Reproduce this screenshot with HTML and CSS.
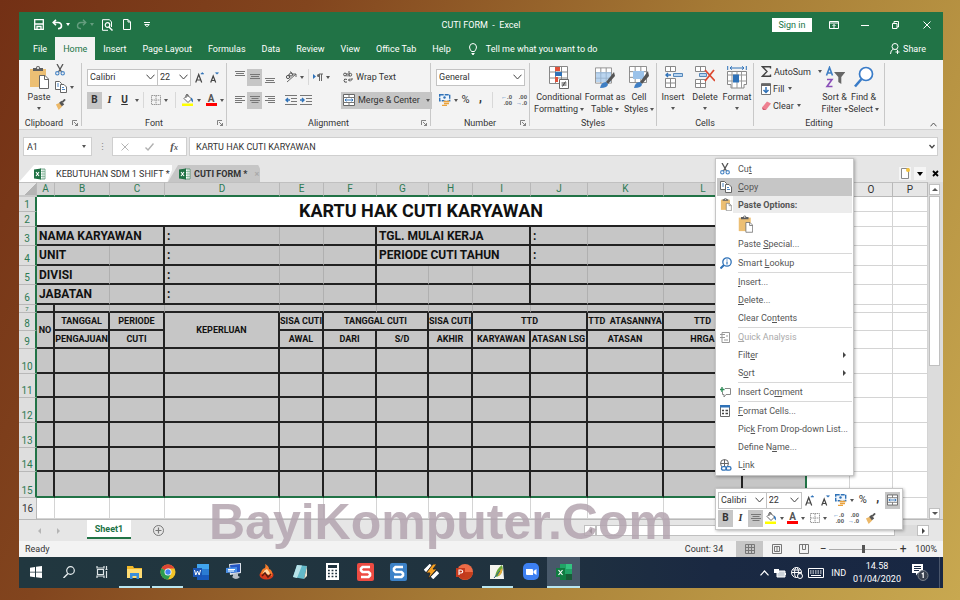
FILE: index.html
```html
<!DOCTYPE html>
<html lang="en">
<head>
<meta charset="utf-8">
<title>CUTI FORM - Excel</title>
<link rel="stylesheet" href="styles.css">
</head>
<body>
<svg class="defs" aria-hidden="true">
  <symbol id="clip" viewBox="0 0 20 23"><path d="M1 3h16v18H1z" fill="#ecbf74"/><path d="M4 5V2h3q0-2 2-2t2 2h3v3z" fill="#5d5d5d"/><circle cx="9" cy="2" r="1" fill="#fff"/><path d="M10.500 9.500h5.500l3.500 3.500v9.500h-9z" fill="#fff" stroke="#666"/><path d="M15.500 9.500v4h4" fill="none" stroke="#666"/></symbol>
  <symbol id="cut" viewBox="0 0 10 12"><path d="M2 0l4.500 8M8 0L3.500 8" stroke="#555" stroke-width="1.300" fill="none"/><circle cx="2.300" cy="9.300" r="1.700" fill="none" stroke="#4a86c5" stroke-width="1.100"/><circle cx="7.700" cy="9.300" r="1.700" fill="none" stroke="#4a86c5" stroke-width="1.100"/></symbol>
  <symbol id="copy" viewBox="0 0 12 12"><path d="M.5.500h4l2 2v6h-6z" fill="#fff" stroke="#666"/><path d="M5.500 3.500h3.500l2.500 2.500v5.500h-6z" fill="#fff" stroke="#666"/><path d="M2 3h2M2 5h2M7 6.500h2M7 8.500h3" stroke="#4a86c5"/></symbol>
  <symbol id="brush" viewBox="0 0 12 12"><path d="M1 6l4-2 3 4-4 4z" fill="#ecb868"/><path d="M4.500 4L7 2l3 4-2.500 2z" fill="#555"/><path d="M8 3.500L11 .500" stroke="#555" stroke-width="2"/></symbol>
  <symbol id="chev" viewBox="0 0 9 6"><path d="M.5.700l4 4.300 4-4.300" fill="none" stroke="#444"/></symbol>
  <symbol id="lines" viewBox="0 0 10 8"><path d="M0 .500h10M1.500 2.500h7M0 4.500h10M1.500 6.500h7" stroke="#777"/></symbol>
  <symbol id="left" viewBox="0 0 10 8"><path d="M0 .500h10M0 2.500h7M0 4.500h10M0 6.500h7" stroke="#777"/></symbol>
  <symbol id="right" viewBox="0 0 10 8"><path d="M0 .500h10M3 2.500h7M0 4.500h10M3 6.500h7" stroke="#777"/></symbol>
  <symbol id="bars" viewBox="0 0 10 8"><path d="M0 1.500h10M1 3.500h8M0 5.500h10" stroke="#777"/></symbol>
  <symbol id="bord" viewBox="0 0 10 10"><path d="M.5.500h9v9h-9zM5 .500v9M.5 5h9" fill="none" stroke="#999" stroke-dasharray="1.500 .6"/></symbol>
  <symbol id="fill" viewBox="0 0 12 12"><path d="M2 4.500L5.500 1l4 4L6 8.500z" fill="#fff" stroke="#666"/><path d="M4 4V1q1.500-2 2 0v2" fill="none" stroke="#666"/><path d="M9 3.500q3 2 1.500 5L9 6z" fill="#2f72b8"/><path d="M0 9.500h11V12H0z" fill="#ff0"/></symbol>
  <symbol id="growA" viewBox="0 0 9 11"><path d="M.7 10.500L3.700 2.500l3 8M1.800 8h3.800" fill="none" stroke="#444" stroke-width="1.200"/><path d="M5.800 2L7.300.500 8.800 2z" fill="#2f72b8" stroke="#2f72b8" stroke-width=".6"/></symbol>
  <symbol id="shrinkA" viewBox="0 0 9 11"><path d="M.7 10.500l2.500-6.500 2.500 6.500M1.600 8.500h3.200" fill="none" stroke="#444" stroke-width="1.200"/><path d="M5.500.700h3L7 2.200z" fill="#2f72b8" stroke="#2f72b8" stroke-width=".6"/></symbol>
  <symbol id="indent" viewBox="0 0 12 10"><path d="M0 .500h12M6 3.500h6M6 6.500h6M0 9.500h12" stroke="#777"/><path d="M5 5H1M3 3L1 5l2 2" stroke="#2f72b8" stroke-width="1.400" fill="none"/></symbol>
  <symbol id="outdent" viewBox="0 0 12 10"><path d="M0 .500h12M6 3.500h6M6 6.500h6M0 9.500h12" stroke="#777"/><path d="M0 5h4M2 3l2 2-2 2" stroke="#2f72b8" stroke-width="1.400" fill="none"/></symbol>
  <symbol id="merge" viewBox="0 0 12 12"><path d="M.5.500h11v11H.5z" fill="#fff" stroke="#666"/><path d="M.5 3.500h11M.5 8.500h11M6 .500v3M6 8.500v3" stroke="#777"/><path d="M2 6h8M3.500 4.700L2 6l1.500 1.300M8.500 4.700L10 6 8.500 7.300" stroke="#2f72b8" fill="none"/></symbol>
  <symbol id="money" viewBox="0 0 12 12"><path d="M.7.700h10v6H.7z" fill="#eef5fc" stroke="#2f72b8" stroke-width="1.400" stroke-dasharray="4 1"/><circle cx="5.500" cy="3.500" r="1.200" fill="#2f72b8"/><ellipse cx="7.500" cy="7.500" rx="3" ry="1.300" fill="#fff"/><path d="M4.500 7.500h6M5 9.500h5M3 11.300h5" stroke="#eaa23c" stroke-width="1.300"/></symbol>
  <symbol id="launch" viewBox="0 0 6 6"><path d="M.5 5V.500H5M2 2l3.500 3.500M5.500 3v2.500H3" fill="none" stroke="#666" stroke-width=".8"/></symbol>
  <symbol id="tbl" viewBox="0 0 19 18"><path d="M.5.500h18v17H.5z" fill="#fff"/><path d="M.5.500h18v17H.5zM.5 6h18M.5 12h18M6.500.500v17M12.500.500v17" fill="none" stroke="#888"/></symbol>
  <symbol id="xl" viewBox="0 0 12 12"><path d="M6 1h5v10H6z" fill="#fff" stroke="#217346" stroke-width=".6"/><path d="M7 3.500h4M7 6h4M7 8.500h4M9 1v10" stroke="#6aa585" stroke-width=".6"/><path d="M0 1.500L7 .500v11L0 10.500z" fill="#217346"/><path d="M2 4l3 4M5 4L2 8" stroke="#fff" stroke-width="1.100"/></symbol>
</svg>

<main class="window">
  <header class="titlebar">
    <div class="qat">
      <button class="ic w20" aria-label="Save"><svg width="10" height="11" viewBox="0 0 10 11"><path d="M.7.700h8.600v9.600H.7zM.7 5h8.600M3 10V7.500h4V10" fill="none" stroke="#fff" stroke-width="1.300"/></svg></button>
      <button class="ic w24" aria-label="Undo"><svg width="11" height="11" viewBox="0 0 11 11"><path d="M4 .800L1.200 3.500 4 6.300M1.500 3.500H6q3.500.200 3.500 3.500Q9.500 9.500 6 9.700" fill="none" stroke="#fff" stroke-width="1.600"/></svg><i class="dn light"></i></button>
      <button class="ic w24 dim" aria-label="Redo"><svg width="11" height="11" viewBox="0 0 11 11"><path d="M7 .800l2.800 2.700L7 6.300M9.500 3.500H5Q1.500 3.700 1.500 7 1.500 9.500 5 9.700" fill="none" stroke="#fff" stroke-width="1.400"/></svg><i class="dn light"></i></button>
      <button class="ic w20" aria-label="Print Preview"><svg width="11" height="12" viewBox="0 0 11 12"><path d="M9.500 8V3L7.500.700h-7v10.600H6" fill="none" stroke="#fff"/><circle cx="5.500" cy="6" r="2.300" fill="none" stroke="#fff" stroke-width="1.200"/><path d="M7 8l3.500 3.500" stroke="#fff" stroke-width="1.500"/></svg></button>
      <button class="ic w20" aria-label="New"><svg width="8" height="11" viewBox="0 0 8 11"><path d="M.5.500h4.500l2.500 2.500v7.500h-7zM5 .500V3h2.500" fill="none" stroke="#fff"/></svg></button>
      <button class="ic w20" aria-label="Customize Quick Access Toolbar"><svg width="6" height="6" viewBox="0 0 6 6"><path d="M0 .500h6M.8 2.500L3 4.800l2.200-2.300z" fill="none" stroke="#fff"/></svg></button>
    </div>
    <h1 class="doc-title">CUTI FORM&nbsp; -&nbsp; Excel</h1>
    <div class="win-controls">
      <button class="signin">Sign in</button>
      <button class="ic" aria-label="Ribbon Display Options"><svg width="10" height="8" viewBox="0 0 10 8"><path d="M.5.500h9v7h-9zM.5 2h9M5 7V3.500M3.500 5L5 3.500 6.500 5" fill="none" stroke="#fff"/></svg></button>
      <button class="ic" aria-label="Minimize"><svg width="8" height="8" viewBox="0 0 8 8"><path d="M0 4.500h8" stroke="#fff"/></svg></button>
      <button class="ic" aria-label="Restore"><svg width="7" height="8" viewBox="0 0 7 8"><path d="M.5 2.500h4.500v5H.5zM2 2.500v-2h4.500V6H5" fill="none" stroke="#fff"/></svg></button>
      <button class="ic" aria-label="Close"><svg width="8" height="8" viewBox="0 0 8 8"><path d="M.5.500l7 7M7.500.500l-7 7" stroke="#fff"/></svg></button>
    </div>
  </header>

  <nav class="tabs">
    <a href="#">File</a><a href="#" class="active">Home</a><a href="#">Insert</a><a href="#">Page Layout</a><a href="#">Formulas</a><a href="#">Data</a><a href="#">Review</a><a href="#">View</a><a href="#">Office Tab</a><a href="#">Help</a>
    <a href="#" class="tell"><svg width="8" height="12" viewBox="0 0 8 12"><path d="M2.500 8.500Q.5 6 .5 4 .7.600 4 .500 7.300.600 7.500 4q0 2-2 4.500zM2.500 10.500h3M3 11.700h2" fill="none" stroke="#fff"/></svg>Tell me what you want to do</a>
    <a href="#" class="share"><svg width="10" height="11" viewBox="0 0 10 11"><circle cx="5" cy="3.500" r="3" fill="none" stroke="#fff"/><path d="M.5 11q0-4 3-5M6.500 6.200L8 8M5.500 9h4M7.500 7v4" fill="none" stroke="#fff"/></svg>Share</a>
  </nav>

  <section class="ribbon">
    <div class="group g-clip">
      <div class="body">
        <button class="big paste"><svg width="20" height="23"><use href="#clip"/></svg><span>Paste</span><i class="dn"></i></button>
        <div class="stack">
          <button class="ic" aria-label="Cut"><svg width="10" height="12"><use href="#cut"/></svg></button>
          <button class="ic" aria-label="Copy"><svg width="12" height="12"><use href="#copy"/></svg><i class="dn"></i></button>
          <button class="ic" aria-label="Format Painter"><svg width="11" height="11"><use href="#brush"/></svg></button>
        </div>
      </div>
      <footer>Clipboard<svg class="launch"><use href="#launch"/></svg></footer>
    </div>

    <div class="group g-font">
      <div class="body rows">
        <div class="row">
          <span class="combo font"><input aria-label="Font" value="Calibri"><svg width="9" height="6"><use href="#chev"/></svg></span><span class="combo size"><input aria-label="Font Size" value="22"><svg width="9" height="6"><use href="#chev"/></svg></span>
          <button class="letter ic" aria-label="Increase Font Size"><svg width="9" height="11"><use href="#growA"/></svg></button>
          <button class="letter ic" aria-label="Decrease Font Size"><svg width="9" height="11"><use href="#shrinkA"/></svg></button>
        </div>
        <div class="row">
          <button class="tog on"><b>B</b></button>
          <button class="tog serif"><i>I</i></button>
          <button class="tog"><b><u>U</u></b></button><i class="dn"></i>
          <span class="sep"></span>
          <button class="ic" aria-label="Borders"><svg width="10" height="10"><use href="#bord"/></svg><i class="dn"></i></button>
          <span class="sep"></span>
          <button class="ic" aria-label="Fill Color"><svg width="12" height="12"><use href="#fill"/></svg><i class="dn"></i></button>
          <button class="ic" aria-label="Font Color"><span class="fcolor">A</span><i class="dn"></i></button>
        </div>
      </div>
      <footer>Font<svg class="launch"><use href="#launch"/></svg></footer>
    </div>

    <div class="group g-align">
      <div class="body">
        <div class="rows a1">
          <div class="row"><button class="tog up2" aria-label="Top Align"><svg width="10" height="8"><use href="#bars"/></svg></button><button class="tog on" aria-label="Middle Align"><svg width="10" height="8"><use href="#bars"/></svg></button><button class="tog down2" aria-label="Bottom Align"><svg width="10" height="8"><use href="#bars"/></svg></button></div>
          <div class="row"><button class="tog" aria-label="Align Left"><svg width="10" height="8"><use href="#left"/></svg></button><button class="tog on" aria-label="Center"><svg width="10" height="8"><use href="#lines"/></svg></button><button class="tog" aria-label="Align Right"><svg width="10" height="8"><use href="#right"/></svg></button></div>
        </div>
        <div class="rows a2">
          <div class="row"><button class="ic" aria-label="Orientation"><svg width="12" height="12" viewBox="0 0 12 12"><path d="M2 11l9-8M8 3h3v3" fill="none" stroke="#666"/><circle cx="3" cy="6" r="1.600" fill="none" stroke="#555"/><circle cx="6" cy="3.500" r="1.600" fill="none" stroke="#555"/><path d="M3.500 3.500L5 7M5.500.500L8 4.500" stroke="#555"/></svg><i class="dn"></i></button><span class="sep"></span><button class="ic" aria-label="Text Direction"><svg width="10" height="8" viewBox="0 0 10 8"><path d="M0 1l3 2.500L0 6z" fill="#2f72b8"/><path d="M6.500 8V1M8.500 8V1M10 1H6" stroke="#666"/><circle cx="5.500" cy="2.500" r="1.500" fill="#666"/></svg><i class="dn"></i></button></div>
          <div class="row tight"><button class="ic" aria-label="Decrease Indent"><svg width="12" height="10"><use href="#indent"/></svg></button><button class="ic" aria-label="Increase Indent"><svg width="12" height="10"><use href="#outdent"/></svg></button></div>
        </div>
        <div class="rows a3">
          <div class="row"><button class="lbl"><svg width="10" height="12" viewBox="0 0 10 12"><circle cx="2" cy="3.500" r="1.400" fill="none" stroke="#555"/><path d="M4 2v3.500M6 0v5.500M4 8.500Q1 7 1 9.500t3 1.500M9 7v2H5.500M7 7.500L5.500 9 7 10.500" fill="none" stroke="#555"/><circle cx="7.300" cy="3.700" r="1.400" fill="none" stroke="#555"/></svg>Wrap Text</button></div>
          <div class="row"><button class="lbl on"><svg width="12" height="12"><use href="#merge"/></svg>Merge &amp; Center<i class="dn"></i></button></div>
        </div>
      </div>
      <footer>Alignment<svg class="launch"><use href="#launch"/></svg></footer>
    </div>

    <div class="group g-num">
      <div class="body rows">
        <div class="row"><span class="combo num"><input aria-label="Number Format" value="General"><svg width="9" height="6"><use href="#chev"/></svg></span></div>
        <div class="row"><button class="ic" aria-label="Accounting Format"><svg width="12" height="12"><use href="#money"/></svg><i class="dn"></i></button><button class="tog pct">%</button><button class="tog comma">,</button><span class="sep"></span><button class="dec" aria-label="Increase Decimal"><b>←</b>.0<br>.00</button><button class="dec" aria-label="Decrease Decimal">.00<br><b>→</b>.0</button></div>
      </div>
      <footer>Number<svg class="launch"><use href="#launch"/></svg></footer>
    </div>

    <div class="group g-styles">
      <div class="body">
        <button class="big b1"><svg width="20" height="23" viewBox="0 0 20 23"><use href="#tbl" width="19" height="18"/><path d="M6 1h5v4H6zM6 11h3v5H6z" fill="#e0523c"/><path d="M6 6h7v4H6z" fill="#2f72b8"/><path d="M10.500 13.500h9v9h-9z" fill="#fff" stroke="#666"/><path d="M12.500 17h5M12.500 19h5M16.500 15.500l-3 5" stroke="#444"/></svg><span>Conditional<br>Formatting<i class="dn"></i></span></button>
        <button class="big b2"><svg width="20" height="23" viewBox="0 0 20 23"><use href="#tbl" width="17" height="17" y="1"/><path d="M1 6h15v10H1z" fill="#9cc3ea" opacity=".7"/><path d="M19 6l-8 10 2 2 7-8z" fill="#555"/><path d="M5 22q1-6 6-6l2 2q0 4-8 4z" fill="#3f7fc4"/></svg><span>Format as<br>Table<i class="dn"></i></span></button>
        <button class="big b3"><svg width="20" height="23" viewBox="0 0 20 23"><use href="#tbl" width="18" height="17"/><path d="M4 5h11v8H4z" fill="#9cc3ea"/><path d="M19 5l-8 11 2 2 7-8z" fill="#555"/><path d="M5 22q1-6 6-6l2 2q0 4-8 4z" fill="#3f7fc4"/></svg><span>Cell<br>Styles<i class="dn"></i></span></button>
      </div>
      <footer>Styles</footer>
    </div>

    <div class="group g-cells">
      <div class="body">
        <button class="big"><svg width="19" height="23" viewBox="0 0 19 23"><path d="M1.500.500h10v5h-10zM6.500.500v5M1.500 12.500h10v9h-10zM6.500 12.500v9M1.500 17h10" fill="#fff" stroke="#888"/><path d="M9.500 7.500h9v3h-9z" fill="#b9d5f0" stroke="#5588bb"/><path d="M7 9H2M4 7L2 9l2 2" stroke="#2f72b8" stroke-width="1.400" fill="none"/></svg><span>Insert</span><i class="dn"></i></button>
        <button class="big"><svg width="20" height="23" viewBox="0 0 20 23"><path d="M.5.500h10v5H.5zM5.500.500v5M.5 13.500h10v8H.5zM5.500 13.500v8M.5 17.500h10" fill="#fff" stroke="#888"/><path d="M4.500 7.500h7v3h-7z" fill="#b9d5f0" stroke="#5588bb"/><path d="M10 4l10 11M19 4L10 15" stroke="#dc4a32" stroke-width="1.800"/></svg><span>Delete</span><i class="dn"></i></button>
        <button class="big"><svg width="20" height="23" viewBox="0 0 20 23"><path d="M3 2h14M5 .300L3 2l2 1.700M15 .300L17 2l-2 1.700M.7 0v4M19.300 0v4" stroke="#2f72b8" fill="none"/><path d="M.5 5.500h19v13H17v3.500H4v-3.500H.5z" fill="#fff" stroke="#888"/><path d="M.5 9h19M.5 15h19M5 5.500V22M14.500 5.500V22M10 5.500V22" stroke="#999"/><path d="M6 8.500h6v8H6z" fill="#2f72b8"/></svg><span>Format</span><i class="dn"></i></button>
      </div>
      <footer>Cells</footer>
    </div>

    <div class="group g-edit">
      <div class="body">
        <div class="trio">
          <button class="lbl"><svg width="11" height="11" viewBox="0 0 11 11"><path d="M9.500 2.500V.800H1.500L6 5.500 1.500 10.200h8V8.500" fill="none" stroke="#444" stroke-width="1.400"/></svg>AutoSum<i class="dn far"></i></button>
          <button class="lbl"><svg width="10" height="12" viewBox="0 0 10 12"><path d="M.5.500h9v11h-9z" fill="#fff" stroke="#777"/><path d="M0 1h10v2H0z" fill="#666"/><path d="M5 4v5.500M2.500 7L5 9.500 7.500 7" fill="none" stroke="#2f72b8" stroke-width="1.500"/></svg>Fill<i class="dn near"></i></button>
          <button class="lbl"><svg width="10" height="10" viewBox="0 0 10 10"><path d="M1 6.500l5-6 4 2-5 6.500H2z" fill="#ee8091"/><path d="M1 6.500L5 9H2z" fill="#c95a6f"/></svg>Clear<i class="dn near"></i></button>
        </div>
        <button class="big"><svg width="20" height="23" viewBox="0 0 20 23"><path d="M1.500 9.500L4.500 1.500l3 8M2.500 7h4" fill="none" stroke="#3f7fc4" stroke-width="1.600"/><path d="M2 13.500h5L2 20.500h5.500" fill="none" stroke="#8a4fb8" stroke-width="1.600"/><path d="M9 6h11.500l-4.200 5v7l-3-2v-5z" fill="#666"/></svg><span>Sort &amp;<br>Filter<i class="dn"></i></span></button>
        <button class="big"><svg width="20" height="23" viewBox="0 0 20 23"><circle cx="12" cy="8" r="6.500" fill="#fff" stroke="#3a7cc8" stroke-width="1.700"/><path d="M7.500 13L1 20.500" stroke="#3a7cc8" stroke-width="2.600"/></svg><span>Find &amp;<br>Select<i class="dn"></i></span></button>
      </div>
      <footer>Editing</footer>
    </div>
    <button class="collapse ic" aria-label="Collapse the Ribbon"><svg width="7" height="5" viewBox="0 0 7 5"><path d="M.5 4.300L3.500 1l3 3.300" fill="none" stroke="#555"/></svg></button>
  </section>

  <section class="formula">
    <label class="namebox"><input aria-label="Name Box" value="A1"><i class="dn"></i></label>
    <span class="grip">⋮</span>
    <div class="fx">
      <button class="ic" aria-label="Cancel"><svg width="8" height="8" viewBox="0 0 8 8"><path d="M.5.500l7 7M7.500.500l-7 7" stroke="#b5b5b5"/></svg></button>
      <button class="ic" aria-label="Enter"><svg width="9" height="8" viewBox="0 0 9 8"><path d="M.5 4.500L3 7l5.500-6.500" fill="none" stroke="#b0b0b0" stroke-width="1.400"/></svg></button>
      <button class="ic fxi" aria-label="Insert Function"><i>f<small>x</small></i></button>
    </div>
    <label class="fbar"><input aria-label="Formula Bar" value="KARTU HAK CUTI KARYAWAN"><svg width="6" height="5" viewBox="0 0 6 5"><path d="M.5 1L3 3.700 5.500 1" fill="none" stroke="#444" stroke-width="1.300"/></svg></label>
  </section>

  <section class="doctabs">
    <button class="doc d1"><svg width="12" height="12"><use href="#xl"/></svg><span>KEBUTUHAN SDM 1 SHIFT *</span></button>
    <button class="doc d2"><svg width="12" height="12"><use href="#xl"/></svg><span>CUTI FORM *</span><em>×</em></button>
    <div class="doc-ctl">
      <button class="ic" aria-label="New workbook"><svg width="9" height="11" viewBox="0 0 9 11"><path d="M.5.500h7v10h-7z" fill="#fff" stroke="#888"/><circle cx="7" cy="2" r="2" fill="#f6c33b"/></svg></button>
      <button class="ic" aria-label="Workbook list"><svg width="6" height="4" viewBox="0 0 6 4"><path d="M0 0h6L3 4z"/></svg></button>
      <button class="ic bare" aria-label="Close workbook"><svg width="7" height="7" viewBox="0 0 7 7"><path d="M1 1l5 5M6 1L1 6" stroke="#000" stroke-width="1.800"/></svg></button>
    </div>
  </section>

  <section class="sheet">
    <table>
      <colgroup><col class="c0"><col class="ca"><col class="cb"><col class="cb"><col class="cd"><col class="ce"><col class="cf"><col class="cg"><col class="ce"><col class="ci"><col class="cj"><col class="ck"><col class="cl"><col class="cm"><col class="cn"><col class="cn"><col></colgroup>
      <thead>
        <tr><th class="corner"></th><th>A</th><th>B</th><th>C</th><th>D</th><th>E</th><th>F</th><th>G</th><th>H</th><th>I</th><th>J</th><th>K</th><th>L</th><th>M</th><th class="off">N</th><th class="off">O</th><th class="off">P</th></tr>
      </thead>
      <tbody class="info">
        <tr class="h15"><th>1</th><td class="title" colspan="13" rowspan="2">KARTU HAK CUTI KARYAWAN</td><td></td><td></td><td></td></tr>
        <tr class="h15"><th>2</th><td></td><td></td><td></td></tr>
        <tr class="h19"><th>3</th><td class="s k" colspan="3">NAMA KARYAWAN</td><td class="s">:</td><td class="s"></td><td class="s k"></td><td class="s k" colspan="3">TGL. MULAI KERJA</td><td class="s">:</td><td class="s"></td><td class="s"></td><td class="s end"></td><td></td><td></td><td></td></tr>
        <tr class="h20"><th>4</th><td class="s" colspan="2">UNIT</td><td class="s k"></td><td class="s">:</td><td class="s"></td><td class="s k"></td><td class="s k" colspan="3">PERIODE CUTI TAHUN</td><td class="s">:</td><td class="s"></td><td class="s"></td><td class="s end"></td><td></td><td></td><td></td></tr>
        <tr class="h19"><th>5</th><td class="s" colspan="2">DIVISI</td><td class="s k"></td><td class="s">:</td><td class="s"></td><td class="s k"></td><td class="s"></td><td class="s"></td><td class="s k"></td><td class="s"></td><td class="s"></td><td class="s"></td><td class="s end"></td><td></td><td></td><td></td></tr>
        <tr class="h20"><th>6</th><td class="s" colspan="2">JABATAN</td><td class="s k"></td><td class="s">:</td><td class="s"></td><td class="s k"></td><td class="s"></td><td class="s"></td><td class="s k"></td><td class="s"></td><td class="s"></td><td class="s"></td><td class="s end"></td><td></td><td></td><td></td></tr>
        <tr class="h8"><th><span>7</span></th><td class="s k"></td><td class="s"></td><td class="s"></td><td class="s"></td><td class="s"></td><td class="s"></td><td class="s"></td><td class="s"></td><td class="s"></td><td class="s"></td><td class="s"></td><td class="s"></td><td class="s end"></td><td></td><td></td><td></td></tr>
      </tbody>
      <tbody class="form">
        <tr class="h18"><th>8</th><td class="s" rowspan="2">NO</td><td class="s">TANGGAL</td><td class="s">PERIODE</td><td class="s" rowspan="2">KEPERLUAN</td><td class="s">SISA CUTI</td><td class="s" colspan="2">TANGGAL CUTI</td><td class="s">SISA CUTI</td><td class="s" colspan="2">TTD</td><td class="s">TTD&nbsp; ATASANNYA</td><td class="s">TTD</td><td class="s end"></td><td></td><td></td><td></td></tr>
        <tr class="h18"><th>9</th><td class="s">PENGAJUAN</td><td class="s">CUTI</td><td class="s">AWAL</td><td class="s">DARI</td><td class="s">S/D</td><td class="s">AKHIR</td><td class="s">KARYAWAN</td><td class="s">ATASAN LSG</td><td class="s">ATASAN</td><td class="s">HRGA</td><td class="s end"></td><td></td><td></td><td></td></tr>
        <tr class="h25"><th>10</th><td class="s"></td><td class="s"></td><td class="s"></td><td class="s"></td><td class="s"></td><td class="s"></td><td class="s"></td><td class="s"></td><td class="s"></td><td class="s"></td><td class="s"></td><td class="s"></td><td class="s end"></td><td></td><td></td><td></td></tr>
        <tr class="h24"><th>11</th><td class="s"></td><td class="s"></td><td class="s"></td><td class="s"></td><td class="s"></td><td class="s"></td><td class="s"></td><td class="s"></td><td class="s"></td><td class="s"></td><td class="s"></td><td class="s"></td><td class="s end"></td><td></td><td></td><td></td></tr>
        <tr class="h25"><th>12</th><td class="s"></td><td class="s"></td><td class="s"></td><td class="s"></td><td class="s"></td><td class="s"></td><td class="s"></td><td class="s"></td><td class="s"></td><td class="s"></td><td class="s"></td><td class="s"></td><td class="s end"></td><td></td><td></td><td></td></tr>
        <tr class="h25"><th>13</th><td class="s"></td><td class="s"></td><td class="s"></td><td class="s"></td><td class="s"></td><td class="s"></td><td class="s"></td><td class="s"></td><td class="s"></td><td class="s"></td><td class="s"></td><td class="s"></td><td class="s end"></td><td></td><td></td><td></td></tr>
        <tr class="h24"><th>14</th><td class="s"></td><td class="s"></td><td class="s"></td><td class="s"></td><td class="s"></td><td class="s"></td><td class="s"></td><td class="s"></td><td class="s"></td><td class="s"></td><td class="s"></td><td class="s"></td><td class="s end"></td><td></td><td></td><td></td></tr>
        <tr class="h26 last"><th>15</th><td class="s"></td><td class="s"></td><td class="s"></td><td class="s"></td><td class="s"></td><td class="s"></td><td class="s"></td><td class="s"></td><td class="s"></td><td class="s"></td><td class="s"></td><td class="s"></td><td class="s end"></td><td></td><td></td><td></td></tr>
        <tr class="h21"><th class="off">16</th><td></td><td></td><td></td><td></td><td></td><td></td><td></td><td></td><td></td><td></td><td></td><td></td><td></td><td></td><td></td><td></td></tr>
      </tbody>
    </table>
    <div class="vscroll"><button aria-label="Scroll up"><i class="tri up"></i></button><span class="thumb"></span><button aria-label="Scroll down"><i class="tri down"></i></button></div>
  </section>

  <section class="sheettabs">
    <span class="navs"><i class="tri lft"></i><i class="tri rgt"></i></span>
    <button class="stab">Sheet1</button>
    <button class="ic add" aria-label="New sheet"><svg width="11" height="11" viewBox="0 0 11 11"><circle cx="5.500" cy="5.500" r="5" fill="none" stroke="#777"/><path d="M5.500 2.500v6M2.500 5.500h6" stroke="#777" stroke-width="1.200"/></svg></button>
    <div class="hscroll"><button aria-label="Scroll left"><i class="tri lft dark"></i></button><span class="thumb"></span><button aria-label="Scroll right"><i class="tri rgt dark"></i></button></div>
  </section>

  <section class="status">
    <span>Ready</span>
    <span class="count">Count: 34</span>
    <button class="view on" aria-label="Normal"><svg width="10" height="10" viewBox="0 0 10 10"><path d="M.5.500h9v9h-9zM.5 3.500h9M.5 6.500h9M3.500.500v9M6.500.500v9" fill="none" stroke="#777"/></svg></button>
    <button class="view" aria-label="Page Layout"><svg width="10" height="10" viewBox="0 0 10 10"><path d="M.5.500h9v9h-9zM2.500 2.500h5v5h-5zM4 4h2M4 6h2" fill="none" stroke="#777"/></svg></button>
    <button class="view" aria-label="Page Break Preview"><svg width="10" height="10" viewBox="0 0 10 10"><path d="M.5.500h9v9h-9zM3.500.500v5M6.500.500v5M3.500 5.500h3" fill="none" stroke="#777"/></svg></button>
    <span class="zm">−</span><input type="range" aria-label="Zoom" min="0" max="100" value="51"><span class="zm">+</span>
    <span class="zoom">100%</span>
  </section>

  <footer class="taskbar">
    <button aria-label="Start"><svg width="12" height="12" viewBox="0 0 12 12"><path d="M0 1.700l5-.7v4.700H0zM6 .800L12 0v5.700H6zM0 6.500h5v4.800l-5-.8zM6 6.500h6V12l-6-.7z" fill="#fff"/></svg></button>
    <button aria-label="Search"><svg width="12" height="12" viewBox="0 0 12 12"><circle cx="7.500" cy="4.500" r="3.800" fill="none" stroke="#e8eef0" stroke-width="1.200"/><path d="M5 7.500L.5 12" stroke="#e8eef0" stroke-width="1.400"/></svg></button>
    <button aria-label="Task View"><svg width="12" height="12" viewBox="0 0 12 12"><path d="M1 0v2h7V0M1 12v-2h7v2M1.500 3.500h6v5h-6z M10.500 0v3M10.500 5v7M9.500 3.500h2" fill="none" stroke="#dfe6e8" stroke-width="1.200"/></svg></button>
    <button class="run" aria-label="File Explorer"><svg width="15" height="14" viewBox="0 0 15 14"><path d="M0 1h6l1 2h8v10H0z" fill="#f2b929"/><path d="M0 4h15v9H0z" fill="#ffdc73"/><path d="M3 8h9v6H9.500v-3h-4v3H3z" fill="#3a8edb"/></svg></button>
    <button class="run" aria-label="Chrome"><svg width="16" height="16" viewBox="0 0 16 16"><circle cx="8" cy="8" r="7.500" fill="#f4c528"/><path d="M8 8L1.500 4.200A7.500 7.500 0 0 1 14.500 4.500H8z" fill="#de4435"/><path d="M8 8L1.500 4.200A7.500 7.500 0 0 0 8 15.500l3-5.500z" fill="#2d9c4f"/><circle cx="8" cy="8" r="3.500" fill="#fff"/><circle cx="8" cy="8" r="2.700" fill="#4284f0"/></svg></button>
    <button aria-label="Word"><svg width="16" height="16" viewBox="0 0 16 16"><path d="M4 0h12v16H4z" fill="#2b7cd3"/><path d="M4 0h12v5H4z" fill="#41a5ee"/><path d="M4 11h12v5H4z" fill="#185abd"/><path d="M0 4h9v9H0z" fill="#1b55b3"/><path d="M1.500 6l1.300 5 1.700-4 1.700 4 1.300-5" fill="none" stroke="#fff"/></svg></button>
    <button aria-label="Remote Desktop"><svg width="16" height="17" viewBox="0 0 16 17"><path d="M3 1l12-1v10L4 12z" fill="#dce2ea"/><path d="M4 2l10-1v8L5 10z" fill="#2455c4"/><path d="M0 5l11-1v5L0 10z" fill="#4a90e8"/><path d="M2 6.500h7M2 8h6" stroke="#fff"/><path d="M7 11l5-1v3l2 1q-4 4-8 0l1-1z" fill="#b8bec6"/></svg></button>
    <button aria-label="CD Burner"><svg width="15" height="16" viewBox="0 0 15 16"><ellipse cx="7.500" cy="11" rx="7" ry="4.500" fill="#d83a1c"/><path d="M2 10Q2 5 6 4 7 2 6 0q4 2 4 5 4 1 3 7z" fill="#f47b2a"/><path d="M4 9q1-3 4-4 3 3 3 6z" fill="#ffd9a8"/><path d="M3 12l3-3 3 4 3-3" fill="none" stroke="#5a1a10" stroke-width="1.500"/></svg></button>
    <button aria-label="Notepad"><svg width="16" height="16" viewBox="0 0 16 16"><path d="M5 1l10 1-3 13L1 13z" fill="#63b9c9"/><path d="M5 1l5 .5L5 14l-4-1z" fill="#b7e2e8"/><path d="M15 2v10l-3 3z" fill="#e7e2cf"/></svg></button>
    <button aria-label="Calculator"><svg width="13" height="17" viewBox="0 0 13 17"><path d="M0 0h13v17H0z" fill="#fff"/><path d="M2 2h9v3H2z" fill="#20323d"/><path d="M2 7.500h9M2 10.500h9M2 13.500h9" stroke="#20323d" stroke-width="1.700" stroke-dasharray="1.800 1.800"/></svg></button>
    <button aria-label="Snagit"><svg width="17" height="18" viewBox="0 0 17 18"><rect width="17" height="18" rx="2" fill="#ee4b42"/><path d="M13 4H5.500L4 5.500v2L5.500 9h6L13 10.500v2L11.500 14H4" fill="none" stroke="#fff" stroke-width="2.600"/></svg></button>
    <button aria-label="Snagit Editor"><svg width="17" height="18" viewBox="0 0 17 18"><rect width="17" height="18" rx="2" fill="#3c82c8"/><path d="M13 4H5.500L4 5.500v2L5.500 9h6L13 10.500v2L11.500 14H4" fill="none" stroke="#fff" stroke-width="2.600"/></svg></button>
    <button aria-label="Winamp"><svg width="15" height="15" viewBox="0 0 15 15"><path d="M1 7l6-6M8 14l6-6" stroke="#fff" stroke-width="3.500"/><path d="M9 0L2 9h4l-2 6 9-10H9l4-5z" fill="#f5a021" stroke="#2a2a2a"/></svg></button>
    <button aria-label="PowerPoint"><svg width="17" height="16" viewBox="0 0 17 16"><circle cx="9" cy="8" r="8" fill="#ed6c47"/><path d="M9 8h8a8 8 0 0 1-14 5z" fill="#c43e1c"/><path d="M0 4h9v9H0z" fill="#c3391d"/><path d="M3 11V6h2q1.700.200 1.700 1.500T5 9H3" fill="none" stroke="#fff" stroke-width="1.100"/></svg></button>
    <button class="run" aria-label="Notepad++"><svg width="15" height="16" viewBox="0 0 15 16"><path d="M0 1h13l1 14H0z" fill="#f4f4ee"/><path d="M5 13Q6 5 12 1q2 5-2 10-2 2-5 2z" fill="#68a63a"/><path d="M8 12q1-5 4-8 1 4-2 7z" fill="#e6a93a"/><path d="M4 14l6-7" stroke="#2b5d8b"/></svg></button>
    <button aria-label="Zoom"><svg width="16" height="17" viewBox="0 0 16 17"><rect width="16" height="17" rx="5" fill="#3d80f2"/><path d="M3 6h6q1 0 1 1v5H4q-1 0-1-1zM10.500 8l3-2v6l-3-2z" fill="#fff"/></svg></button>
    <button class="run cur" aria-label="Excel"><svg width="16" height="16" viewBox="0 0 16 16"><path d="M4 0h12v16H4z" fill="#21a366"/><path d="M10 0h6v5h-6z" fill="#33c481"/><path d="M4 10h12v6H4z" fill="#107c41"/><path d="M10 10h6v6h-6z" fill="#185c37"/><path d="M0 4h9v9H0z" fill="#107c41"/><path d="M2.500 6l4 5M6.500 6l-4 5" stroke="#fff" stroke-width="1.200"/></svg></button>
    <div class="tray">
      <svg width="9" height="6" viewBox="0 0 9 6"><path d="M.5 5.300l4-4.300 4 4.300" fill="none" stroke="#fff" stroke-width="1.200"/></svg>
      <svg width="12" height="10" viewBox="0 0 12 10"><path d="M3 3h8v6H3z" fill="#ccd3da" stroke="#fff"/><path d="M0 1h5v4H0z" fill="#fff"/><path d="M11.500 5v2" stroke="#fff"/></svg>
      <svg width="12" height="12" viewBox="0 0 12 12"><circle cx="5.500" cy="5.500" r="5" fill="none" stroke="#fff"/><ellipse cx="5.500" cy="5.500" rx="2" ry="5" fill="none" stroke="#fff"/><path d="M.5 5.500h10M1.500 3h8" stroke="#fff"/><circle cx="9" cy="9" r="2.500" fill="#1b2b45" stroke="#fff"/></svg>
      <svg width="16" height="10" viewBox="0 0 16 10"><path d="M.5.500h15v9H.5z" fill="none" stroke="#fff"/><path d="M2 3h12M2 5h12" stroke="#fff" stroke-dasharray="1.500 1"/><path d="M3 7.500h10" stroke="#fff"/></svg>
      <span class="lang">IND</span>
      <time>14.58<br>01/04/2020</time>
      <svg class="note" width="17" height="17" viewBox="0 0 17 17"><path d="M0 0h11v9H6l-2 2.500V9H0z" fill="#fff"/><path d="M2 2.500h7M2 4.500h7M2 6.500h5" stroke="#1b2b45"/><circle cx="11" cy="11.500" r="5" fill="#39414f" stroke="#777f8a"/><path d="M9.700 10l1.500-1v5" fill="none" stroke="#fff" stroke-width="1.200"/></svg>
    </div>
  </footer>

  <p class="watermark">BayiKomputer.Com</p>

  <ul class="menu">
    <li><svg width="10" height="12"><use href="#cut"/></svg>Cu<u>t</u></li>
    <li class="hot"><svg width="12" height="12"><use href="#copy"/></svg><u>C</u>opy</li>
    <li class="head"><svg width="12" height="13"><use href="#clip"/></svg><b>Paste Options:</b></li>
    <li class="opt"><button class="ic" aria-label="Paste"><svg width="15" height="18"><use href="#clip"/></svg></button></li>
    <li>Paste <u>S</u>pecial...</li>
    <li class="ln"><svg width="12" height="12" viewBox="0 0 12 12"><circle cx="7" cy="5" r="4.200" fill="#fff" stroke="#2f72b8" stroke-width="1.300"/><path d="M4 8L.5 11.500" stroke="#2f72b8" stroke-width="2"/><path d="M7 4.500V7.500M7 2.500v1" stroke="#2f72b8" stroke-width="1.200"/></svg>Smart <u>L</u>ookup</li>
    <li class="ln"><u>I</u>nsert...</li>
    <li><u>D</u>elete...</li>
    <li>Clear Co<u>n</u>tents</li>
    <li class="ln gray"><svg width="10" height="11" viewBox="0 0 10 11"><path d="M2 .500h7.500v10H2zM0 2.500h5M0 5.500h5M4 8h4M6 4h2" fill="none" stroke="#999"/></svg><u>Q</u>uick Analysis</li>
    <li>Filt<u>e</u>r<i class="tri rgt dark"></i></li>
    <li>S<u>o</u>rt<i class="tri rgt dark"></i></li>
    <li class="ln"><svg width="12" height="11" viewBox="0 0 12 11"><path d="M5 1.500h5.500v6H6l-2 2.500V7.500H2.500V5" fill="none" stroke="#888"/><path d="M2 0v5M0 2.500h4.500" stroke="#2e8b57" stroke-width="1.400"/></svg>Insert Co<u>m</u>ment</li>
    <li class="ln"><svg width="10" height="12" viewBox="0 0 10 12"><path d="M.5.500h9v11h-9z" fill="#fff" stroke="#666"/><path d="M0 0h10v2.500H0z" fill="#2f72b8"/><path d="M2 5.500h2M5.500 5.500h2.500M2 8.500h2M5.500 8.500h2.500" stroke="#444" stroke-width="1.300"/></svg><u>F</u>ormat Cells...</li>
    <li>Pic<u>k</u> From Drop-down List...</li>
    <li>Define N<u>a</u>me...</li>
    <li><svg width="12" height="12" viewBox="0 0 12 12"><circle cx="4.500" cy="4.500" r="4" fill="none" stroke="#666"/><path d="M.5 4.500h8M4.500.500v8" stroke="#666"/><path d="M2 7h10v5H2z" fill="#fff"/><rect x="1.500" y="7.700" width="5" height="3.500" rx="1.700" fill="none" stroke="#2f72b8" stroke-width="1.300"/><rect x="6" y="7.700" width="5" height="3.500" rx="1.700" fill="none" stroke="#2f72b8" stroke-width="1.300"/></svg>L<u>i</u>nk</li>
  </ul>

  <div class="mini">
    <div class="row"><span class="combo mfont"><input aria-label="Font" value="Calibri"><svg width="9" height="6"><use href="#chev"/></svg></span><span class="combo msize"><input aria-label="Font Size" value="22"><svg width="9" height="6"><use href="#chev"/></svg></span><button class="letter ic" aria-label="Increase Font Size"><svg width="9" height="11"><use href="#growA"/></svg></button><button class="letter ic" aria-label="Decrease Font Size"><svg width="9" height="11"><use href="#shrinkA"/></svg></button><button class="ic" aria-label="Accounting Format"><svg width="12" height="12"><use href="#money"/></svg><i class="dn"></i></button><button class="tog pct">%</button><button class="tog comma">,</button><button class="tog on" aria-label="Merge"><svg width="11" height="12"><use href="#merge"/></svg></button></div>
    <div class="row"><button class="tog on"><b>B</b></button><button class="tog serif"><i>I</i></button><button class="tog on" aria-label="Center"><svg width="10" height="8"><use href="#lines"/></svg></button><button class="ic" aria-label="Fill Color"><svg width="12" height="12"><use href="#fill"/></svg><i class="dn"></i></button><button class="ic" aria-label="Font Color"><span class="fcolor">A</span><i class="dn"></i></button><button class="ic" aria-label="Borders"><svg width="10" height="10"><use href="#bord"/></svg><i class="dn"></i></button><button class="dec" aria-label="Increase Decimal"><b>←</b>.0<br>.00</button><button class="dec" aria-label="Decrease Decimal">.00<br><b>→</b>.0</button><button class="ic" aria-label="Format Painter"><svg width="11" height="11"><use href="#brush"/></svg></button></div>
  </div>
</main>
</body>
</html>
```

FILE: styles.css
```css
* { box-sizing: border-box; }

body {
  margin: 0;
  min-height: 100vh;
  padding: 12px 17px 12px 19px;
  background: linear-gradient(115deg, #733015 0%, #82451e 25%, #a57a35 58%, #b89443 80%, #c8a850 100%);
  font: 9px/12px Roboto, sans-serif;
  color: #333;
}

.defs { position: absolute; width: 0; height: 0; }

button, input { font: inherit; color: inherit; border: 0; padding: 0; margin: 0; background: none; min-width: 0; }
svg { flex: none; display: block; }
a { color: inherit; text-decoration: none; }

.window { position: relative; background: #e6e6e6; }

.ic { display: flex; align-items: center; justify-content: center; }

.dn { flex: none; display: inline-block; border: 2px solid transparent; border-top: 3px solid #555; border-bottom: 0; margin-left: 3px; vertical-align: middle; }
.dn.light { border-top-color: #fff; }

.tri { border: 3px solid transparent; width: 0; height: 0; }
.tri.up { border-bottom-color: #555; border-top: 0; }
.tri.down { border-top-color: #555; border-bottom: 0; }
.tri.lft { border-right-color: #b5b5b5; border-left: 0; }
.tri.rgt { border-left-color: #b5b5b5; border-right: 0; }
.tri.lft.dark { border-right-color: #444; }
.tri.rgt.dark { border-left-color: #444; }

/* Title bar */
.titlebar { display: grid; grid-template-columns: 1fr auto 1fr; align-items: center; height: 25px; background: #217346; color: #fff; }
.qat { display: flex; padding-left: 10px; }
.w20 { width: 20px; }
.w24 { width: 24px; }
.dim { opacity: .3; }
.doc-title { margin: 0; font-size: 9px; font-weight: 400; }
.win-controls { display: flex; justify-content: flex-end; align-items: center; padding-right: 1px; }
.win-controls .ic { width: 31px; }
.signin { width: 40px; height: 14px; margin-right: 6px; background: #fff; color: #217346; }

/* Ribbon tabs */
.tabs { display: flex; height: 23px; padding-left: 6px; background: #217346; color: #fff; }
.tabs a { display: flex; align-items: center; padding: 0 8px; white-space: nowrap; }
.tabs .active { background: #f3f3f3; color: #217346; }
.tabs .tell { gap: 9px; padding-left: 10px; }
.tabs .share { margin-left: auto; gap: 3px; padding-right: 17px; }

/* Ribbon */
.ribbon { display: flex; height: 70px; background: #f3f3f3; border-bottom: 1px solid #d2d2d2; position: relative; }
.group { display: flex; flex-direction: column; flex: none; border-right: 1px solid #c8c8c8; margin: 3px 0; white-space: nowrap; }
.group .body { flex: 1; display: flex; }
.group footer { position: relative; text-align: center; height: 12px; margin-bottom: -3px; }
.launch { position: absolute; right: 3px; top: 3px; width: 6px; height: 6px; }
.g-clip { width: 63px; }
.g-clip footer { padding-right: 12px; }
.g-font { width: 145px; }
.g-align { width: 204px; }
.g-num { width: 99px; }
.g-styles { width: 127px; }
.g-cells { width: 97px; }
.g-edit { width: 131px; }

.group .body.rows { flex-direction: column; }
.rows { display: flex; flex-direction: column; gap: 5px; padding-top: 5px; }
.row { display: flex; align-items: center; height: 18px; }
.big { display: flex; flex-direction: column; align-items: center; flex: 1; padding-top: 3px; line-height: 12px; text-align: center; }
.big span { margin-top: 2px; }
.big > .dn { margin: 4px 0 0; }
.big svg { height: 23px; }
.big span .dn { margin-left: 2px; }
.paste { flex: none; width: 40px; }
.stack { display: flex; flex-direction: column; gap: 3px; margin-left: -4px; }
.stack .ic { height: 14px; justify-content: flex-start; }

.combo { display: flex; align-items: center; justify-content: space-between; height: 17px; background: #fff; border: 1px solid #c3c3c3; padding: 0 2px; }
.combo input { flex: 1; width: 10px; }
.combo.font { width: 71px; margin-left: 5px; }
.combo.size { width: 34px; margin-left: -1px; margin-right: 1px; }
.combo.num { width: 89px; margin-left: 5px; }
.letter { width: 15px; height: 16px; }
.tog { display: flex; align-items: center; justify-content: center; width: 15px; height: 17px; font-size: 10px; }
.tog.on, .lbl.on { background: #c6c6c6; }
.tog.serif { font-family: "Liberation Serif", serif; font-weight: 700; }
.g-font .row:last-child { padding-left: 5px; }
.g-font .row:last-child .ic { width: 23px; }
.sep { width: 1px; height: 16px; background: #d8d8d8; margin: 0 4px; }
.fcolor { width: 11px; height: 12px; border-bottom: 3px solid #f00; font-weight: 700; font-size: 10px; line-height: 9px; text-align: center; color: #555; }
.tog.pct { font-size: 11px; }
.tog.comma { font-weight: 700; font-size: 12px; padding-bottom: 4px; }
.dec { font: 700 6px/6px "Liberation Sans", sans-serif; width: 15px; text-align: right; color: #555; white-space: nowrap; }
.dec b { color: #2f72b8; }

.a1 { padding-left: 5px; }
.up2 { align-items: flex-start; padding-top: 1px; }
.down2 { align-items: flex-end; padding-bottom: 1px; }
.a2 { flex: none; padding-left: 8px; width: 64px; }
.a2 .tight { gap: 3px; }
.lbl { display: flex; align-items: center; gap: 3px; height: 17px; padding: 0 2px; white-space: nowrap; }
.g-num .row:last-child { padding-left: 8px; }

.g-styles .b1 { flex: none; width: 52px; margin-left: 3px; }
.g-styles .b2 { flex: none; width: 40px; }
.g-styles .b3 { flex: none; width: 28px; }
.g-edit .big { flex: none; width: 29px; }
.trio { display: flex; flex-direction: column; width: 66px; padding: 0 0 0 5px; }
.trio .lbl { gap: 2px; }
.lbl .far { margin-left: 5px; }
.lbl .near { margin-left: 1px; }
.collapse { position: absolute; right: 6px; bottom: 2px; }

/* Formula bar */
.formula { display: flex; align-items: center; padding: 7px 5px 9px 4px; }
.formula label, .fx { display: flex; align-items: center; height: 19px; background: #fff; border: 1px solid #cfcfcf; }
.namebox { width: 69px; padding: 0 5px 0 3px; }
.namebox input { flex: 1; width: 20px; }
.grip { width: 20px; text-align: center; color: #888; }
.fx { width: 75px; justify-content: space-around; }
.fxi { font: 700 11px/12px "Liberation Serif", serif; color: #555; }
.fxi small { font-size: 8px; }
.fbar { flex: 1; margin-left: 2px; padding: 0 2px 0 6px; }
.fbar input { flex: 1; }

/* Workbook tabs */
.doctabs { display: flex; align-items: flex-end; height: 17px; }
.doc { display: flex; align-items: center; height: 17px; white-space: nowrap; }
.d1 { width: 153px; padding-left: 15px; gap: 10px; background: #fff; clip-path: polygon(0 100%, 15px 0, 100% 0, 100% 30%, 97% 100%); }
.d2 { width: 92px; margin-left: -4px; padding-left: 11px; gap: 3px; background: #c6c6c6; font-weight: 700; clip-path: polygon(0 100%, 10px 0, 98% 0, 100% 20%, 100% 100%); }
.d2 em { margin-left: 4px; color: #aaa; font-style: normal; }
.doc-ctl { margin-left: auto; display: flex; gap: 3px; padding: 0 2px 2px 0; }
.doc-ctl .ic { width: 12px; height: 13px; background: #f5f5f5; }
.doc-ctl .bare { background: none; }

/* Grid */
.sheet { display: flex; }
.sheet table { flex: 1; width: 0; table-layout: fixed; border-spacing: 0; background: #fff; font: 700 12px/12px Roboto, sans-serif; color: #111; }
.c0, .ca { width: 18px; }
.cb { width: 55px; }
.cd { width: 115px; }
.ce { width: 44px; }
.cf { width: 53px; }
.cg { width: 52px; }
.ci { width: 58px; }
.cj { width: 57px; }
.ck { width: 76px; }
.cl { width: 79px; }
.cm { width: 64px; }
.cn { width: 43px; }
.sheet th, .sheet td { padding: 0; overflow: hidden; white-space: nowrap; }
.sheet th { font: 10px/12px Roboto, sans-serif; color: #2d7a54; background: #d2d2d2; }
.sheet thead th { height: 15px; border-right: 1px solid #b8b8b8; border-bottom: 2px solid #217346; border-top: 1px solid #c0c0c0; }
.sheet th.off { color: #333; background: #e6e6e6; border-bottom: 1px solid #b8b8b8; }
.sheet thead .corner { background: linear-gradient(135deg, #e6e6e6 60%, #b4b4b4 60%); border-bottom-color: #c8c8c8; }
.sheet tbody th { vertical-align: bottom; border-right: 2px solid #217346; border-bottom: 1px solid #b8b8b8; background: #dedede; }
.sheet tbody th.off { border-right: 1px solid #b8b8b8; border-bottom: 0; vertical-align: middle; }
.sheet td { border-right: 1px solid #d4d4d4; border-bottom: 1px solid #d4d4d4; }
.sheet td.s { background: #c6c6c6; border-right-color: #b0b0b0; border-bottom: 2px solid #222; padding-left: 2px; }
.sheet .info td.k { border-right: 2px solid #222; }
.sheet .form td.s { border-right: 2px solid #222; padding: 0; text-align: center; font-size: 9px; }
.sheet td.title { font-size: 18px; line-height: 20px; text-align: center; border-bottom: 2px solid #222; border-right: 2px solid #217346; }
.sheet .info td.end, .sheet .form td.end { border-right: 2px solid #217346; }
.sheet .last td.s { border-bottom: 2px solid #217346; }
.h8 { height: 8px; }
.sheet .h8 th { line-height: 6px; font-size: 6px; }
.h8 span { display: block; height: 6px; }
.h15 { height: 15px; }
.h18 { height: 18px; }
.h19 { height: 19px; }
.h20 { height: 20px; }
.h21 { height: 21px; }
.h24 { height: 24px; }
.h25 { height: 25px; }
.h26 { height: 26px; }

.vscroll { width: 15px; display: flex; flex-direction: column; padding: 2px 3px 0 1px; background: #dcdcdc; }
.vscroll button, .vscroll .thumb, .hscroll button, .hscroll .thumb { background: #fff; border: 1px solid #c0c0c0; display: flex; align-items: center; justify-content: center; }
.vscroll button { height: 11px; }
.vscroll .thumb { height: 170px; margin: 1px 0 auto; }

/* Sheet tabs */
.sheettabs { display: flex; align-items: center; height: 22px; border-top: 1px solid #b8b8b8; }
.navs { display: flex; gap: 16px; width: 68px; padding-left: 19px; }
.stab { align-self: flex-start; width: 44px; height: 19px; background: #fff; border-bottom: 2px solid #217346; color: #217346; font-weight: 700; }
.add { margin-left: 22px; }
.hscroll { margin-left: auto; display: flex; width: 345px; margin-right: 14px; background: #dcdcdc; }
.hscroll button { width: 12px; height: 11px; }
.hscroll .thumb { flex: 1; margin-right: 22px; }

/* Status bar */
.status { display: flex; align-items: center; height: 16px; background: #f3f3f3; padding: 0 6px; }
.count { margin-left: auto; margin-right: 13px; }
.view { width: 27px; height: 16px; display: flex; align-items: center; justify-content: center; }
.view.on { background: #c6c6c6; }
.zm { font-size: 12px; width: 12px; text-align: center; }
.status input { width: 68px; height: 12px; appearance: none; background: linear-gradient(#aaa, #aaa) center / 100% 1px no-repeat; }
.status input::-webkit-slider-thumb { appearance: none; width: 3px; height: 8px; background: #555; }
.zoom { margin-left: 6px; }

/* Taskbar */
.taskbar { display: flex; height: 31px; background: linear-gradient(90deg, #21373f 0%, #20323f 55%, #1a2942 75%, #182743 100%); color: #fff; }
.taskbar button { width: 33px; display: flex; align-items: center; justify-content: center; border-bottom: 2px solid transparent; background-clip: padding-box; }
.taskbar .run { border-image: linear-gradient(90deg, transparent 8%, #b9e6f0 8%, #b9e6f0 92%, transparent 92%) 2; }
.taskbar .cur { background: #48596a; border-image: none; border-bottom-color: #b9e6f0; }
.tray { margin-left: auto; display: flex; align-items: center; gap: 5px; padding-right: 10px; border-right: 1px solid #4a566b; margin-right: 3px; }
.tray .lang { margin: 0 2px; }
.tray time { text-align: center; line-height: 13px; margin-right: 6px; }

.watermark { position: absolute; left: 190px; top: 481px; margin: 0; font: 700 50px/58px "Liberation Sans", sans-serif; color: #b4a5b0; opacity: .85; white-space: nowrap; }

/* Context menu */
.menu { position: absolute; left: 696px; top: 146px; width: 139px; margin: 0; padding: 1px; list-style: none; background: #fff; border: 1px solid #c6c6c6; box-shadow: 1px 1px 3px rgba(0, 0, 0, .3); color: #555; }
.menu li { position: relative; display: flex; align-items: center; height: 18px; padding-left: 21px; white-space: pre; }
.menu li > svg { position: absolute; left: 3px; }
.menu .hot { background: #c6c6c6; }
.menu .head { background: linear-gradient(90deg, #fff 16px, #ececec 16px); height: 17px; }
.menu .opt { height: 22px; }
.menu .ln { height: 19px; border-top: 1px solid transparent; border-image: linear-gradient(90deg, transparent 16%, #d8d8d8 16%) 1; }
.menu .gray { color: #aaa; }
.menu .tri { position: absolute; right: 6px; }

/* Mini toolbar */
.mini { position: absolute; left: 696px; top: 476px; width: 188px; padding: 2px; background: #fff; border: 1px solid #c6c6c6; box-shadow: 1px 1px 3px rgba(0, 0, 0, .3); }
.mini .row { height: 18px; }
.combo.mfont { width: 49px; }
.combo.msize { width: 36px; margin-left: -1px; }
.mini .row .ic { width: 22px; }
.mini .row .letter { width: 16px; }
```
